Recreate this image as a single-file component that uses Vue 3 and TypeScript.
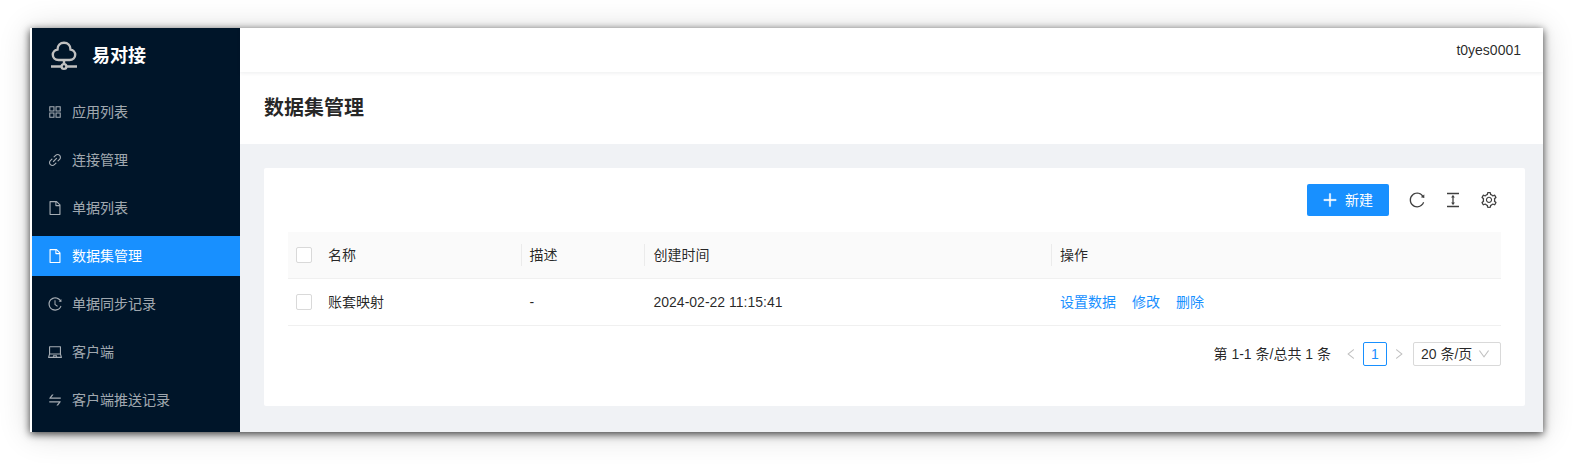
<script setup lang="ts">
const icons: Record<string, string> = {
  appstore: 'M464 144H160c-8.8 0-16 7.2-16 16v304c0 8.8 7.2 16 16 16h304c8.8 0 16-7.2 16-16V160c0-8.8-7.2-16-16-16zm-52 268H212V212h200v200zm452-268H560c-8.8 0-16 7.2-16 16v304c0 8.8 7.2 16 16 16h304c8.8 0 16-7.2 16-16V160c0-8.8-7.2-16-16-16zm-52 268H612V212h200v200zM464 544H160c-8.8 0-16 7.2-16 16v304c0 8.8 7.2 16 16 16h304c8.8 0 16-7.2 16-16V560c0-8.8-7.2-16-16-16zm-52 268H212V612h200v200zm452-268H560c-8.8 0-16 7.2-16 16v304c0 8.8 7.2 16 16 16h304c8.8 0 16-7.2 16-16V560c0-8.8-7.2-16-16-16zm-52 268H612V612h200v200z',
  link: 'M574 665.4a8.03 8.03 0 00-11.3 0L446.5 781.6c-53.8 53.8-144.6 59.5-204 0-59.5-59.5-53.8-150.2 0-204l116.2-116.2c3.1-3.1 3.1-8.2 0-11.3l-39.8-39.8a8.03 8.03 0 00-11.3 0L191.4 526.5c-84.6 84.6-84.6 221.5 0 306s221.5 84.6 306 0l116.2-116.2c3.1-3.1 3.1-8.2 0-11.3L574 665.4zm258.6-474c-84.6-84.6-221.5-84.6-306 0L410.3 307.6a8.03 8.03 0 000 11.3l39.7 39.7c3.1 3.1 8.2 3.1 11.3 0l116.2-116.2c53.8-53.8 144.6-59.5 204 0 59.5 59.5 53.8 150.2 0 204L665.3 562.6a8.03 8.03 0 000 11.3l39.8 39.8c3.1 3.1 8.2 3.1 11.3 0l116.2-116.2c84.5-84.6 84.5-221.5 0-306.1zM610.1 372.3a8.03 8.03 0 00-11.3 0L372.3 598.7a8.03 8.03 0 000 11.3l39.6 39.6c3.1 3.1 8.2 3.1 11.3 0l226.4-226.4c3.1-3.1 3.1-8.2 0-11.3l-39.5-39.6z',
  file: 'M854.6 288.6L639.4 73.4c-6-6-14.1-9.4-22.6-9.4H192c-17.7 0-32 14.3-32 32v832c0 17.7 14.3 32 32 32h640c17.7 0 32-14.3 32-32V311.3c0-8.5-3.4-16.7-9.4-22.7zM790.2 326H602V137.8L790.2 326zm1.8 562H232V136h302v216a42 42 0 0042 42h216v494z',
  history: 'M536.1 273H488c-4.4 0-8 3.6-8 8v275.3c0 2.6 1.2 5 3.3 6.5l165.3 120.7c3.6 2.6 8.6 1.9 11.2-1.7l28.6-39c2.7-3.7 1.9-8.7-1.7-11.2L544.1 528.5V281c0-4.4-3.6-8-8-8zm219.8 75.2l156.8 38.3c5 1.2 9.9-2.6 9.9-7.7l.8-161.5c0-6.7-7.7-10.5-12.9-6.3L752.9 334.1a8 8 0 003 14.1zm167.7 301.1l-56.7-19.5a8 8 0 00-10.1 4.8c-1.9 5.1-3.9 10.1-6 15.1-17.8 42.1-43.3 80-75.9 112.5a353 353 0 01-112.5 75.9 352.18 352.18 0 01-137.7 27.8c-47.8 0-94.1-9.3-137.7-27.8a353 353 0 01-112.5-75.9c-32.5-32.5-58-70.4-75.9-112.5A353.44 353.44 0 01171 512c0-47.8 9.3-94.2 27.8-137.8 17.8-42.1 43.3-80 75.9-112.5a353 353 0 01112.5-75.9C430.6 167.3 477 158 524.8 158s94.1 9.3 137.7 27.8A353 353 0 01775 261.7c10.2 10.3 19.8 21 28.6 32.3l59.8-46.8C784.7 146.6 662.2 81.9 524.6 82 285 82.1 92.6 276.7 95 516.4 97.4 751.9 288.9 942 524.8 942c185.5 0 343.5-117.6 403.7-282.3 1.5-4.2-.7-8.9-4.9-10.4z',
  laptop: 'M956.9 845.1L896.4 632V168c0-17.7-14.3-32-32-32h-704c-17.7 0-32 14.3-32 32v464L67.9 845.1C60.4 866 75.8 888 98 888h828.8c22.2 0 37.6-22 30.1-42.9zM200.4 208h624v395h-624V208zm228.3 608l8.1-37h150.3l8.1 37H428.7zm224 0l-19.1-86.7c-.8-3.7-4.1-6.3-7.8-6.3H398.2c-3.8 0-7 2.6-7.8 6.3L371.3 816H151l42.3-149h638.2l42.3 149H652.7z',
  swap: 'M847.9 592H152c-4.4 0-8 3.6-8 8v60c0 4.4 3.6 8 8 8h605.2L612.9 851c-4.1 5.2-.4 13 6.3 13h72.5c4.9 0 9.5-2.2 12.6-6.1l168.8-214.1c16.5-21 1.6-51.8-25.2-51.8zM872 356H266.8l144.3-183c4.1-5.2.4-13-6.3-13h-72.5c-4.9 0-9.5 2.2-12.6 6.1L150.9 380.2c-16.5 21-1.6 51.8 25.1 51.8h696c4.4 0 8-3.6 8-8v-60c0-4.4-3.6-8-8-8z',
  plus: 'M482 152h60q8 0 8 8v704q0 8-8 8h-60q-8 0-8-8V160q0-8 8-8zM176 474h672q8 0 8 8v60q0 8-8 8H176q-8 0-8-8v-60q0-8 8-8z',
  reload: 'M909.1 209.3l-56.4 44.1C775.8 155.1 656.2 92 521.9 92 290 92 102.3 279.5 102 511.5 101.7 743.7 289.8 932 521.9 932c181.3 0 335.8-115 394.6-276.1 1.5-4.2-.7-8.9-4.9-10.3l-56.7-19.5a8 8 0 00-10.1 4.8c-1.8 5-3.8 10-5.9 14.9-17.3 41-42.1 77.8-73.7 109.4A344.77 344.77 0 01655.9 829c-42.3 17.9-87.4 27-133.8 27-46.5 0-91.5-9.1-133.8-27A341.5 341.5 0 01279 755.2a342.16 342.16 0 01-73.7-109.4c-17.9-42.4-27-87.4-27-133.9s9.1-91.5 27-133.9c17.3-41 42.1-77.8 73.7-109.4 31.6-31.6 68.4-56.4 109.3-73.8 42.3-17.9 87.4-27 133.8-27 46.5 0 91.5 9.1 133.8 27a341.5 341.5 0 01109.3 73.8c9.9 9.9 19.2 20.4 27.8 31.4l-60.2 47a8 8 0 003 14.1l175.6 43c5 1.2 9.9-2.6 9.9-7.7l.8-180.9c-.1-6.6-7.8-10.3-13-6.2z',
  height: 'M840 836H184c-4.4 0-8 3.6-8 8v60c0 4.4 3.6 8 8 8h656c4.4 0 8-3.6 8-8v-60c0-4.4-3.6-8-8-8zm0-724H184c-4.4 0-8 3.6-8 8v60c0 4.4 3.6 8 8 8h656c4.4 0 8-3.6 8-8v-60c0-4.4-3.6-8-8-8zM610.8 378c6 0 9.4-7 5.7-11.7L515.7 238.7a7.14 7.14 0 00-11.3 0L403.6 366.3a7.23 7.23 0 005.7 11.7H476v268h-62.8c-6 0-9.4 7-5.7 11.7l100.8 127.5c2.9 3.7 8.5 3.7 11.3 0l100.8-127.5c3.7-4.7.4-11.7-5.7-11.7H548V378h62.8z',
  setting: 'M924.8 625.7l-65.5-56c3.1-19 4.7-38.4 4.7-57.8s-1.6-38.8-4.7-57.8l65.5-56a32.03 32.03 0 009.3-35.2l-.9-2.6a443.74 443.74 0 00-79.7-137.9l-1.8-2.1a32.12 32.12 0 00-35.1-9.5l-81.3 28.9c-30-24.6-63.5-44-99.7-57.6l-15.7-85a32.05 32.05 0 00-25.8-25.7l-2.7-.5c-52.1-9.4-106.9-9.4-159 0l-2.7.5a32.05 32.05 0 00-25.8 25.7l-15.8 85.4a351.86 351.86 0 00-99 57.4l-81.9-29.1a32 32 0 00-35.1 9.5l-1.8 2.1a446.02 446.02 0 00-79.7 137.9l-.9 2.6c-4.5 12.5-.8 26.5 9.3 35.2l66.3 56.6c-3.1 18.8-4.6 38-4.6 57.1 0 19.2 1.5 38.4 4.6 57.1L99 625.5a32.03 32.03 0 00-9.3 35.2l.9 2.6c18.1 50.4 44.9 96.9 79.7 137.9l1.8 2.1a32.12 32.12 0 0035.1 9.5l81.9-29.1c29.8 24.5 63.1 43.9 99 57.4l15.8 85.4a32.05 32.05 0 0025.8 25.7l2.7.5a449.4 449.4 0 00159 0l2.7-.5a32.05 32.05 0 0025.8-25.7l15.7-85a350 350 0 0099.7-57.6l81.3 28.9a32 32 0 0035.1-9.5l1.8-2.1c34.8-41.1 61.6-87.5 79.7-137.9l.9-2.6c4.5-12.3.8-26.3-9.3-35zM788.3 465.9c2.5 15.1 3.8 30.6 3.8 46.1s-1.3 31-3.8 46.1l-6.6 40.1 74.7 63.9a370.03 370.03 0 01-42.6 73.6L721 702.8l-31.4 25.8c-23.9 19.6-50.5 35-79.3 45.8l-38.1 14.3-17.9 97a377.5 377.5 0 01-85 0l-17.9-97.2-37.8-14.5c-28.5-10.8-55-26.2-78.7-45.7l-31.4-25.9-93.4 33.2c-17-22.9-31.2-47.6-42.6-73.6l75.5-64.5-6.5-40c-2.4-14.9-3.7-30.3-3.7-45.5 0-15.3 1.2-30.6 3.7-45.5l6.5-40-75.5-64.5c11.3-26.1 25.6-50.7 42.6-73.6l93.4 33.2 31.4-25.9c23.7-19.5 50.2-34.9 78.7-45.7l37.9-14.3 17.9-97.2c28.1-3.2 56.8-3.2 85 0l17.9 97 38.1 14.3c28.7 10.8 55.4 26.2 79.3 45.8l31.4 25.8 92.8-32.9c17 22.9 31.2 47.6 42.6 73.6L781.8 426l6.5 39.9zM512 326c-97.2 0-176 78.8-176 176s78.8 176 176 176 176-78.8 176-176-78.8-176-176-176zm79.2 255.2A111.6 111.6 0 01512 614c-29.9 0-58-11.7-79.2-32.8A111.6 111.6 0 01400 502c0-29.9 11.7-58 32.8-79.2C454 401.6 482.1 390 512 390c29.9 0 58 11.6 79.2 32.8A111.6 111.6 0 01624 502c0 29.9-11.7 58-32.8 79.2z',
  left: 'M724 218.3V141c0-6.7-7.7-10.4-12.9-6.3L260.3 486.8a31.86 31.86 0 000 50.3l450.8 352.1c5.3 4.1 12.9.4 12.9-6.3v-77.3c0-4.9-2.3-9.6-6.1-12.6l-360-281 360-281.1c3.8-3 6.1-7.7 6.1-12.6z',
  right: 'M765.7 486.8L314.9 134.7A7.97 7.97 0 00302 141v77.3c0 4.9 2.3 9.6 6.1 12.6l360 281.1-360 281.1c-3.9 3-6.1 7.7-6.1 12.6V883c0 6.7 7.7 10.4 12.9 6.3l450.8-352.1a31.96 31.96 0 000-50.4z',
  down: 'M884 256h-75c-5.1 0-9.9 2.5-12.9 6.6L512 654.2 227.9 262.6c-3-4.1-7.8-6.6-12.9-6.6h-75c-6.5 0-10.3 7.4-6.5 12.7l352.6 486.1c12.8 17.6 39 17.6 51.7 0l352.6-486.1c3.9-5.3.1-12.7-6.4-12.7z',
}

const menu = [
  { label: '应用列表', icon: 'appstore' },
  { label: '连接管理', icon: 'link' },
  { label: '单据列表', icon: 'file' },
  { label: '数据集管理', icon: 'file', active: true },
  { label: '单据同步记录', icon: 'history' },
  { label: '客户端', icon: 'laptop' },
  { label: '客户端推送记录', icon: 'swap' },
]
const columns = ['名称', '描述', '创建时间', '操作']
</script>

<template>
  <div class="stage">
    <div class="window">
      <aside class="sider">
        <div class="logo">
          <svg class="logo-icon" viewBox="50 40 28 32" fill="none" stroke="#c0c0c0" stroke-width="2.4">
            <path d="M58.500 60H69.500C73 60 75.200 57.500 75.200 54.800C75.200 52 73 49.800 70.500 49.500C70.500 45.500 67.700 42.800 64 42.800C60.300 42.800 57.500 45.500 57.500 49.500C55 49.800 52.800 52 52.800 54.800C52.800 57.500 55 60 58.500 60Z" />
            <path d="M64 60V64" />
            <path d="M51 66.500H61M67 66.500H77" />
            <circle cx="64" cy="66.500" r="2.400" fill="#001529" />
          </svg>
          <span class="logo-text">易对接</span>
        </div>
        <nav class="menu">
          <div v-for="m in menu" :key="m.label" class="menu-item" :class="{ active: m.active }">
            <svg class="ico" viewBox="64 64 896 896" fill="currentColor"><path :d="icons[m.icon]" /></svg>
            <span>{{ m.label }}</span>
          </div>
        </nav>
      </aside>
      <main class="main">
        <header class="topbar"><span>t0yes0001</span></header>
        <section class="page-head"><h1>数据集管理</h1></section>
        <section class="content">
          <div class="card">
            <div class="toolbar">
              <button class="btn">
                <svg class="ico" viewBox="64 64 896 896" fill="currentColor" stroke="currentColor" stroke-width="24"><path :d="icons.plus" /></svg>
                <span>新建</span>
              </button>
              <div class="tools">
                <svg class="tool" viewBox="64 64 896 896" fill="currentColor"><path :d="icons.reload" /></svg>
                <svg class="tool" viewBox="64 64 896 896" fill="currentColor"><path :d="icons.height" /></svg>
                <svg class="tool" viewBox="64 64 896 896" fill="currentColor"><path :d="icons.setting" /></svg>
              </div>
            </div>
            <div class="table">
              <div class="tr th">
                <div class="c-check"><span class="check"></span></div>
                <div class="c-name">{{ columns[0] }}</div>
                <div class="c-desc sep">{{ columns[1] }}</div>
                <div class="c-time sep">{{ columns[2] }}</div>
                <div class="c-op sep">{{ columns[3] }}</div>
              </div>
              <div class="tr td">
                <div class="c-check"><span class="check"></span></div>
                <div class="c-name">账套映射</div>
                <div class="c-desc">-</div>
                <div class="c-time">2024-02-22 11:15:41</div>
                <div class="c-op links"><a>设置数据</a><a>修改</a><a>删除</a></div>
              </div>
            </div>
            <div class="pager">
              <span class="total">第 1-1 条/总共 1 条</span>
              <svg class="arrow" viewBox="64 64 896 896" fill="currentColor"><path :d="icons.left" /></svg>
              <span class="page">1</span>
              <svg class="arrow" viewBox="64 64 896 896" fill="currentColor"><path :d="icons.right" /></svg>
              <span class="size">20 条/页<svg class="caret" viewBox="64 64 896 896" fill="currentColor"><path :d="icons.down" /></svg></span>
            </div>
          </div>
        </section>
      </main>
    </div>
  </div>
</template>

<style>
html, body { margin: 0; background: #fff; }
</style>

<style scoped>
.stage {
  box-sizing: border-box;
  height: 464px;
  padding: 28px 30px 32px;
  overflow: hidden;
}
.window {
  box-sizing: border-box;
  display: flex;
  width: 1513px;
  height: 404px;
  padding-left: 2px;
  background: #fff;
  box-shadow: 0 2px 8px rgba(0,0,0,.75), 0 2px 30px rgba(0,0,0,.16);
  font-family: "Liberation Sans", "Noto Sans CJK SC", sans-serif;
  font-size: 14px;
  line-height: 22px;
  color: rgba(0,0,0,.85);
  overflow: hidden;
}
.sider { width: 208px; flex: none; background: #001529; overflow: hidden; }
.logo { display: flex; align-items: center; height: 56px; padding-left: 18px; }
.logo-icon { width: 28px; height: 32px; flex: none; }
.logo-text { margin-left: 14px; color: #fff; font-size: 18px; font-weight: 600; }
.menu { padding-top: 8px; }
.menu-item {
  display: flex; align-items: center;
  height: 40px; margin-bottom: 8px; padding-left: 16px;
  color: rgba(255,255,255,.65);
}
.menu-item .ico { width: 14px; height: 14px; margin-right: 10px; }
.menu-item.active { background: #1890ff; color: #fff; }
.main { flex: 1; min-width: 0; display: flex; flex-direction: column; }
.topbar {
  flex: none; height: 44px; display: flex; align-items: center; justify-content: flex-end;
  padding-right: 22px; box-shadow: 0 1px 4px rgba(0,21,41,.08);
  position: relative;
}
.page-head { flex: none; height: 72px; display: flex; align-items: center; padding-left: 24px; }
.page-head h1 { margin: 0; font-size: 20px; line-height: 32px; font-weight: 600; }
.content { flex: 1; background: #f0f2f5; padding: 24px 18px 26px 24px; }
.card { background: #fff; border-radius: 2px; padding: 16px 24px; height: 238px; box-sizing: border-box; }
.toolbar { display: flex; justify-content: flex-end; align-items: center; height: 32px; margin-bottom: 16px; }
.btn {
  display: flex; align-items: center; justify-content: flex-start;
  width: 82px; height: 32px; padding: 0 0 0 15px; border: 0; border-radius: 2px;
  background: #1890ff; color: #fff; font: inherit;
}
.btn .ico { width: 16px; height: 16px; margin-right: 7px; }
.tools { display: flex; margin-left: 20px; margin-right: 4px; gap: 20px; }
.tool { width: 16px; height: 16px; color: rgba(0,0,0,.75); }
.tr { display: flex; align-items: center; box-sizing: border-box; border-bottom: 1px solid #f0f0f0; }
.th { height: 47px; background: #fafafa; font-weight: 400; }
.td { height: 47px; }
.tr > div { box-sizing: border-box; padding-left: 8px; position: relative; }
.c-check { width: 32px; display: flex; align-items: center; }
.check { display: block; width: 16px; height: 16px; box-sizing: border-box; border: 1px solid #d9d9d9; border-radius: 2px; background: #fff; }
.c-name { width: 201.5px; }
.c-desc { width: 124px; }
.c-time { width: 406.5px; }
.c-op { flex: 1; }
.sep::before {
  content: ""; position: absolute; left: -1px; top: 50%; width: 1px; height: 22px;
  margin-top: -11px; background: rgba(0,0,0,.06);
}
.c-time.sep::before { left: -1.5px; }
.links { display: flex; gap: 16px; color: #1890ff; }
.pager { display: flex; justify-content: flex-end; align-items: center; margin-top: 16px; height: 24px; }
.total { margin-right: 14px; }
.arrow { width: 12px; height: 12px; color: rgba(0,0,0,.25); }
.page {
  box-sizing: border-box; width: 24px; height: 24px; margin: 0 6px; line-height: 22px; text-align: center;
  border: 1px solid #1890ff; border-radius: 2px; color: #1890ff;
}
.size {
  box-sizing: border-box; display: flex; align-items: center; justify-content: space-between;
  width: 88px; height: 24px; margin-left: 8px; padding: 0 10px 0 7px; border: 1px solid #d9d9d9; border-radius: 2px;
}
.caret { width: 12px; height: 12px; color: rgba(0,0,0,.25); }
</style>
